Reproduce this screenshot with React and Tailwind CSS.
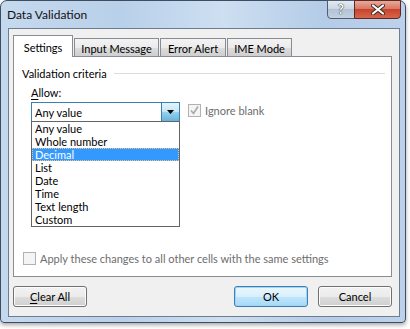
import React from "react";

const items = ["Any value", "Whole number", "Decimal", "List", "Date", "Time", "Text length", "Custom"];

function Tab({ label, active, width }) {
  if (active) {
    return (
      <div className={`h-[22px] ${width} -mb-px relative z-10 border border-b-0 border-[#898c95] bg-white flex items-start justify-center pt-[4px]`}>
        {label}
      </div>
    );
  }
  return (
    <div className={`h-[18px] ${width} border border-b-0 border-[#898c95] bg-[linear-gradient(#f3f3f3,#ebebeb_50%,#dddddd_50%,#cfcfcf)] flex items-start justify-center pt-[2px]`}>
      {label}
    </div>
  );
}

function CheckBox({ checked }) {
  return (
    <div className="w-[13px] h-[13px] border border-[#b1b1b1] bg-[#f4f4f4] flex items-center justify-center shrink-0">
      {checked && (
        <svg width="11" height="11" viewBox="0 0 11 11">
          <path d="M2 5.5 L4.5 8.5 L9 1.5" fill="none" stroke="#a8a8a8" strokeWidth="1.6" />
        </svg>
      )}
    </div>
  );
}

function Button({ children, primary }) {
  return (
    <div
      className={`w-[74px] h-[21px] rounded-[3px] border flex items-center justify-center ${
        primary
          ? "border-[#3c7fb1] bg-[linear-gradient(#eaf6fd,#d9f0fc_50%,#bee6fd_50%,#a7d9f5)] shadow-[inset_0_0_0_1px_#9fd6f5]"
          : "border-[#707070] bg-[linear-gradient(#f2f2f2,#ebebeb_50%,#dddddd_50%,#cfcfcf)] shadow-[inset_0_0_0_1px_#fcfcfc]"
      }`}
    >
      {children}
    </div>
  );
}

export default function App() {
  return (
    <div
      className="w-[410px] h-[329px] bg-white overflow-hidden text-[11px] leading-[15px] text-black"
      style={{ fontFamily: "Lato, 'Liberation Sans', sans-serif" }}
    >
      <div className="w-[406px] h-[323px] flex flex-col rounded-t-[7px] rounded-b-[4px] border border-[#3f4d60] bg-[linear-gradient(90deg,#c5d9ee,#b9d0ea_30%,#cddff1_55%,#b4cce8_80%,#bcd2ec)] shadow-[0_2px_4px_rgba(0,0,0,0.35)]">
        {/* title bar */}
        <div className="h-[27px] flex items-start justify-between">
          <div className="pl-[6px] pt-[6px] text-[12px] text-[#111]">Data Validation</div>
          <div className="flex mr-[4px] -mt-px">
            <div className="w-[28px] h-[19px] rounded-bl-[4px] border border-[#505d6e] bg-[linear-gradient(#e3eaf2,#c9d5e2_50%,#b3c3d5_50%,#c3d1e0)] flex items-center justify-center text-[13px] font-bold text-white [text-shadow:0_0_1px_#222,0_0_1px_#222]">
              ?
            </div>
            <div className="w-[47px] h-[19px] -ml-px rounded-br-[4px] border border-[#5a2a22] bg-[linear-gradient(#e9a99b,#d8735e_50%,#c7442c_50%,#d7664a)] flex items-center justify-center">
              <svg width="14" height="11" viewBox="0 0 14 11">
                <path d="M2 1.5 L12 9.5 M12 1.5 L2 9.5" stroke="#3b2a28" strokeWidth="4" strokeLinecap="round" />
                <path d="M2 1.5 L12 9.5 M12 1.5 L2 9.5" stroke="#ffffff" strokeWidth="2.2" strokeLinecap="round" />
              </svg>
            </div>
          </div>
        </div>

        {/* client area */}
        <div className="ml-[7px] w-[392px] h-[289px] border border-[#6f7c8c] bg-[#f0f0f0] flex flex-col">
          <div className="mt-[6px] ml-[4px] h-[21px] flex items-end gap-[1px]">
            <Tab label="Settings" active width="w-[60px]" />
            <Tab label="Input Message" width="w-[85px]" />
            <Tab label="Error Alert" width="w-[66px]" />
            <Tab label="IME Mode" width="w-[65px]" />
          </div>

          {/* tab panel */}
          <div className="ml-[4px] w-[379px] h-[221px] border border-[#898c95] bg-white flex flex-col pl-[8px] pr-[6px] pt-[9px]">
            <div className="flex items-center gap-[7px]">
              <span>Validation criteria</span>
              <div className="flex-1 h-px bg-[#d5dfe5]" />
            </div>

            <div className="ml-[9px] mt-[4px]">
              <span className="underline underline-offset-2">A</span>llow:
            </div>

            <div className="ml-[9px] mt-[2px] flex items-start gap-[8px]">
              <div className="relative">
                <div className="w-[149px] h-[20px] border border-[#3c7fb1] bg-white flex items-center">
                  <span className="pl-[3px] flex-1">Any value</span>
                  <div className="w-[18px] h-[18px] border-l border-[#3c7fb1] bg-[linear-gradient(#e5f4fc,#c4e5f6_50%,#98d1ef_50%,#68b3db)] flex items-center justify-center">
                    <svg width="7" height="4" viewBox="0 0 7 4">
                      <path d="M0 0 H7 L3.5 4 Z" fill="#000" />
                    </svg>
                  </div>
                </div>
                <div className="absolute left-0 top-[19px] w-[149px] border border-[#646464] bg-white z-20 flex flex-col">
                  {items.map((it) => (
                    <div
                      key={it}
                      className={`h-[13px] leading-[13px] pl-[3px] ${
                        it === "Decimal" ? "bg-[#3399ff] text-white outline-1 outline-dotted outline-offset-[-1px] outline-[#f5c57a]" : ""
                      }`}
                    >
                      {it}
                    </div>
                  ))}
                </div>
              </div>
              <div className="mt-[1px] flex items-center gap-[4px] text-[#6d6d6d]">
                <CheckBox checked />
                <span>Ignore blank</span>
              </div>
            </div>

            <div className="flex-1" />
            <div className="flex items-center gap-[4px] text-[#6d6d6d] mb-[10px] ml-[1px]">
              <CheckBox />
              <span>Apply these changes to all other cells with the same settings</span>
            </div>
          </div>

          {/* buttons */}
          <div className="mt-[9px] ml-[4px] w-[379px] flex">
            <Button>
              <span className="underline underline-offset-2">C</span>lear All
            </Button>
            <div className="flex-1" />
            <Button primary>OK</Button>
            <div className="w-[10px]" />
            <Button>Cancel</Button>
          </div>
        </div>
      </div>
    </div>
  );
}
